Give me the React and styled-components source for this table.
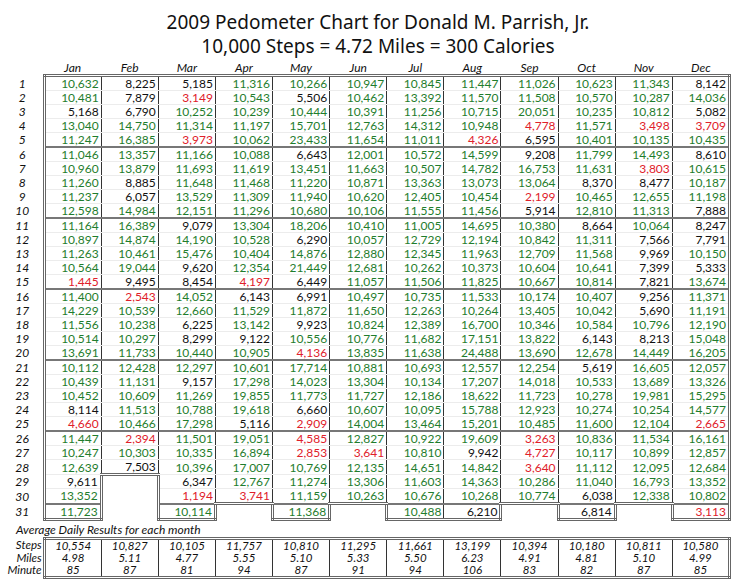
import React from 'react'
import styled, { createGlobalStyle } from 'styled-components'

const GlobalStyle = createGlobalStyle`
  body {
    margin: 0;
    background: #fff;
    font-family: Lato, "Noto Sans", sans-serif;
    color: #111;
  }
`

const MONTHS = ['Jan', 'Feb', 'Mar', 'Apr', 'May', 'Jun', 'Jul', 'Aug', 'Sep', 'Oct', 'Nov', 'Dec']

const STEPS = [
  [10632, 10481, 5168, 13040, 11247, 11046, 10960, 11260, 11237, 12598, 11164, 10897, 11263, 10564, 1445, 11400, 14229, 11556, 10514, 13691, 10112, 10439, 10452, 8114, 4660, 11447, 10247, 12639, 9611, 13352, 11723],
  [8225, 7879, 6790, 14750, 16385, 13357, 13879, 8885, 6057, 14984, 16389, 14874, 10461, 19044, 9495, 2543, 10539, 10238, 10297, 11733, 12428, 11131, 10609, 11513, 10466, 2394, 10303, 7503],
  [5185, 3149, 10252, 11314, 3973, 11166, 11693, 11648, 13529, 12151, 9079, 14190, 15476, 9620, 8454, 14052, 12660, 6225, 8299, 10440, 12297, 9157, 11269, 10788, 17298, 11501, 10335, 10396, 6347, 1194, 10114],
  [11316, 10543, 10239, 11197, 10062, 10088, 11619, 11468, 11309, 11296, 13304, 10528, 10404, 12354, 4197, 6143, 11529, 13142, 9122, 10905, 10601, 17298, 19855, 19618, 5116, 19051, 16894, 17007, 12767, 3741],
  [10266, 5506, 10444, 15701, 23433, 6643, 13451, 11220, 11940, 10680, 18206, 6290, 14876, 21449, 6449, 6991, 11872, 9923, 10556, 4136, 17714, 14023, 11773, 6660, 2909, 4585, 2853, 10769, 11274, 11159, 11368],
  [10947, 10462, 10391, 12763, 11654, 12001, 11663, 10871, 10620, 10106, 10410, 10057, 12880, 12681, 11057, 10497, 11650, 10824, 10776, 13835, 10881, 13304, 11727, 10607, 14004, 12827, 3641, 12135, 13306, 10263],
  [10845, 13392, 11256, 14312, 11011, 10572, 10507, 13363, 12405, 11555, 11005, 12729, 12345, 10262, 11506, 10735, 12263, 12389, 11682, 11638, 10693, 10134, 12186, 10095, 13464, 10922, 10810, 14651, 11603, 10676, 10488],
  [11447, 11570, 10715, 10948, 4326, 14599, 14782, 13073, 10454, 11456, 14695, 12194, 11963, 10373, 11825, 11533, 10264, 16700, 17151, 24488, 12557, 17207, 18622, 15788, 15201, 19609, 9942, 14842, 14363, 10268, 6210],
  [11026, 11508, 20051, 4778, 6595, 9208, 16753, 13064, 2199, 5914, 10380, 10842, 12709, 10604, 10667, 10174, 13405, 10346, 13822, 13690, 12254, 14018, 11723, 12923, 10485, 3263, 4727, 3640, 10286, 10774],
  [10623, 10570, 10235, 11571, 10401, 11799, 11631, 8370, 10465, 12810, 8664, 11311, 11568, 10641, 10814, 10407, 10042, 10584, 6143, 12678, 5619, 10533, 10278, 10274, 11600, 10836, 10117, 11112, 11040, 6038, 6814],
  [11343, 10287, 10812, 3498, 10135, 14493, 3803, 8477, 12655, 11313, 10064, 7566, 9969, 7399, 7821, 9256, 5690, 10796, 8213, 14449, 16605, 13689, 19981, 10254, 12104, 11534, 10899, 12095, 16793, 12338],
  [8142, 14036, 5082, 3709, 10435, 8610, 10615, 10187, 11198, 7888, 8247, 7791, 10150, 5333, 13674, 11371, 11191, 12190, 15048, 16205, 12057, 13326, 15295, 14577, 2665, 16161, 12857, 12684, 13352, 10802, 3113],
]

const AVERAGES = [
  { label: 'Steps', values: ['10,554', '10,827', '10,105', '11,757', '10,810', '11,295', '11,661', '13,199', '10,394', '10,180', '10,811', '10,580'] },
  { label: 'Miles', values: ['4.98', '5.11', '4.77', '5.55', '5.10', '5.33', '5.50', '6.23', '4.91', '4.81', '5.10', '4.99'] },
  { label: 'Minute', values: ['85', '87', '81', '94', '87', '91', '94', '106', '83', '82', '87', '85'] },
]

const OUTLINE = '3px double #666'
const COLUMN_LINE = '1px solid #333'
const WEEK_LINE = '2px solid #777'
const ROW_LINE = '1px solid #ececec'

const toneFor = n => (n >= 10000 ? '#1f7d2d' : n >= 5000 ? '#111' : '#e0202a')
const fmt = n => n.toLocaleString('en-US')

const Page = styled.div`
  width: 740px;
  height: 582px;
  overflow: hidden;
`

const Title = styled.h1`
  margin: 0;
  padding: 10px 0 0 16px;
  font-family: "Noto Sans", sans-serif;
  font-weight: normal;
  font-size: 19px;
  line-height: 24px;
  text-align: center;
  color: #111;
`

const Chart = styled.table`
  margin-top: 3px;
  border-collapse: collapse;
  table-layout: fixed;
  width: 731px;
`

const MonthHead = styled.th`
  font-weight: normal;
  font-style: italic;
  font-size: 12px;
  line-height: 13px;
  height: 13px;
  padding: 0;
  vertical-align: bottom;
  text-align: center;
`

/* a row that closes a five-day block carries the 2px rule, so it is 1px shorter */
const DayRow = styled.tr`
  height: ${({ $week }) => ($week ? 13 : 14)}px;
`

const DayLabel = styled.td`
  font-style: italic;
  font-size: 12px;
  line-height: 13px;
  padding: 0 0 0 2px;
  text-align: center;
`

const Cell = styled.td`
  font-size: 12px;
  line-height: 13px;
  padding: 0 2px 0 0;
  text-align: right;
  color: ${({ $tone }) => $tone};
  border-top: ${({ $top }) => $top};
  border-bottom: ${({ $bottom }) => $bottom};
  border-left: ${({ $left }) => $left};
  border-right: ${({ $right }) => $right};
`

const Blank = styled.td`
  padding: 0;
  border: none;
`

const Caption = styled.div`
  margin: 2px 0 0 16px;
  font-style: italic;
  font-size: 12px;
  line-height: 14px;
`

const Summary = styled.table`
  margin-top: 0;
  border-collapse: collapse;
  table-layout: fixed;
  width: 731px;
`

const SummaryLabel = styled.td`
  font-style: italic;
  font-size: 11.5px;
  line-height: 12px;
  height: 12px;
  padding: 0 1px 0 0;
  text-align: right;
`

const SummaryCell = styled.td`
  font-style: italic;
  font-size: 11.5px;
  line-height: 12px;
  height: 12px;
  padding: 0;
  text-align: center;
  border-left: ${({ $first }) => ($first ? OUTLINE : COLUMN_LINE)};
  border-right: ${({ $last }) => ($last ? OUTLINE : COLUMN_LINE)};
  border-top: ${({ $top }) => ($top ? OUTLINE : 'none')};
  border-bottom: ${({ $bottom }) => ($bottom ? OUTLINE : 'none')};
`

const Columns = () => (
  <colgroup>
    <col style={{ width: 44 }} />
    {MONTHS.map(m => (
      <col key={m} style={{ width: 57 }} />
    ))}
  </colgroup>
)

const has = (m, d) => m >= 0 && m < 12 && d <= STEPS[m].length

export default () => {
  const days = Array.from({ length: 31 }, (_, i) => i + 1)

  return (
    <Page>
      <GlobalStyle />
      <Title>
        2009 Pedometer Chart for Donald M. Parrish, Jr.
        <br />
        10,000 Steps = 4.72 Miles = 300 Calories
      </Title>

      <Chart>
        <Columns />
        <thead>
          <tr>
            <MonthHead />
            {MONTHS.map(m => (
              <MonthHead key={m}>{m}</MonthHead>
            ))}
          </tr>
        </thead>
        <tbody>
          {days.map(d => (
            <DayRow key={`Day_${d}`} $week={d % 5 === 0 && d < 30}>
              <DayLabel>{d}</DayLabel>
              {MONTHS.map((m, i) => {
                if (!has(i, d)) return <Blank key={m} />
                const n = STEPS[i][d - 1]
                const last = d === STEPS[i].length
                return (
                  <Cell
                    key={m}
                    $tone={toneFor(n)}
                    $top={d === 1 ? OUTLINE : 'none'}
                    $bottom={last ? OUTLINE : d % 5 === 0 ? WEEK_LINE : ROW_LINE}
                    $left={has(i - 1, d) ? COLUMN_LINE : OUTLINE}
                    $right={has(i + 1, d) ? COLUMN_LINE : OUTLINE}
                  >
                    {fmt(n)}
                  </Cell>
                )
              })}
            </DayRow>
          ))}
        </tbody>
      </Chart>

      <Caption>Average Daily Results for each month</Caption>
      <Summary>
        <Columns />
        <tbody>
          {AVERAGES.map((row, r) => (
            <tr key={row.label}>
              <SummaryLabel>{row.label}</SummaryLabel>
              {row.values.map((v, i) => (
                <SummaryCell
                  key={MONTHS[i]}
                  $first={i === 0}
                  $last={i === 11}
                  $top={r === 0}
                  $bottom={r === AVERAGES.length - 1}
                >
                  {v}
                </SummaryCell>
              ))}
            </tr>
          ))}
        </tbody>
      </Summary>
    </Page>
  )
}
